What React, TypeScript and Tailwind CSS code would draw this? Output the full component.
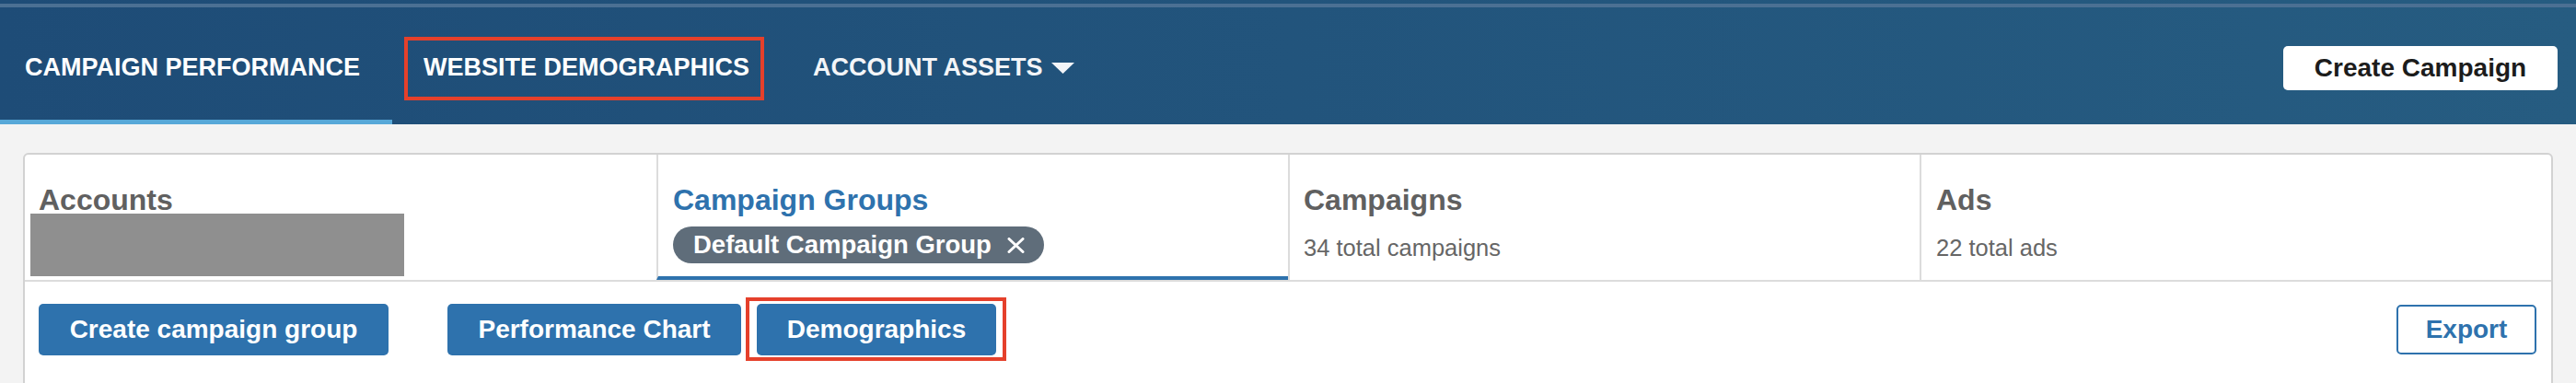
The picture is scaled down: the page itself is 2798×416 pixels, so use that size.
import { ReactNode } from "react";

function NavItem({ label, active, pad, children }: { label: string; active?: boolean; pad: string; children?: ReactNode }) {
  return (
    <div
      className={`relative flex items-center pt-[8px] border-b-[5px] ${pad} ${
        active ? "border-[#57a8d8]" : "border-transparent"
      }`}
    >
      <span className="text-[27px] font-bold text-white leading-none">{label}</span>
      {children}
    </div>
  );
}

function TabTitle({ text, active }: { text: string; active?: boolean }) {
  return (
    <div className={`text-[32px] leading-[38px] font-bold ${active ? "text-[#2e72ad]" : "text-[#606060]"}`}>{text}</div>
  );
}

function BlueButton({ label, width }: { label: string; width: string }) {
  return (
    <button className={`${width} h-[56px] rounded-[5px] bg-[#2e72ad] text-white text-[28px] font-bold flex items-center justify-center`}>
      {label}
    </button>
  );
}

export default function App() {
  return (
    <div className="w-[2798px] h-[416px] overflow-hidden bg-[#f3f3f3] font-['Liberation_Sans',Arial,sans-serif]">
      {/* Top navigation */}
      <header className="h-[135px] flex flex-col bg-gradient-to-r from-[#1e4c77] to-[#265c81]">
        <div className="h-[4px]" />
        <div className="h-[4px] bg-[#4b7093]" />
        <div className="flex-1 flex items-stretch">
          <NavItem label="CAMPAIGN PERFORMANCE" active pad="pl-[27px] pr-[35px]" />
          <NavItem label="WEBSITE DEMOGRAPHICS" pad="px-[34px]">
            <div className="absolute left-[13px] right-[18px] top-[32px] h-[69px] border-4 border-[#e5402b]" />
          </NavItem>
          <div className="flex items-center pt-[8px] pb-[5px] pl-[35px]">
            <span className="text-[27px] font-bold text-[#f3f5f8] leading-none">ACCOUNT ASSETS</span>
            <svg className="ml-[9px] mt-[2px]" width="25" height="12" viewBox="0 0 25 12">
              <polygon points="0,0 25,0 12.5,12" fill="#f3f5f8" />
            </svg>
          </div>
          <div className="ml-auto mr-[20px] flex items-center pt-[5px]">
            <button className="w-[298px] h-[48px] rounded-[5px] bg-white text-[#1c1c1c] text-[28px] font-bold">
              Create Campaign
            </button>
          </div>
        </div>
      </header>

      {/* Content card */}
      <main className="px-[25px] pt-[31px]">
        <div className="h-[320px] rounded-[6px] border-2 border-[#d2d2d2] bg-white">
          <div className="grid grid-cols-4 h-[138px] border-b-2 border-[#dcdcdc]">
            <div className="pl-[15px] pt-[30px]">
              <TabTitle text="Accounts" />
              <div className="-ml-[9px] -mt-[4px] w-[406px] h-[68px] bg-[#8f8f8f]" />
            </div>
            <div className="pl-[16px] pt-[30px] border-l-2 border-b-4 border-l-[#dcdcdc] border-b-[#2e72ad]">
              <TabTitle text="Campaign Groups" active />
              <div className="mt-[10px] inline-flex items-center h-[40px] rounded-full bg-[#5f6d7a] pl-[22px] pr-[21px]">
                <span className="text-[27.5px] font-bold text-white leading-none">Default Campaign Group</span>
                <svg className="ml-[17px]" width="19" height="17" viewBox="0 0 19 17">
                  <path d="M2 1.5 L17 15.5 M17 1.5 L2 15.5" stroke="#fff" strokeWidth="3" strokeLinecap="round" />
                </svg>
              </div>
            </div>
            <div className="pl-[15px] pt-[30px] border-l-2 border-[#dcdcdc]">
              <TabTitle text="Campaigns" />
              <div className="mt-[18px] text-[25.5px] leading-[30px] text-[#666]">34 total campaigns</div>
            </div>
            <div className="pl-[16px] pt-[30px] border-l-2 border-[#dcdcdc]">
              <TabTitle text="Ads" />
              <div className="mt-[18px] text-[25.5px] leading-[30px] text-[#666]">22 total ads</div>
            </div>
          </div>

          <div className="flex items-start pt-[24px] pl-[15px] pr-[16px]">
            <BlueButton label="Create campaign group" width="w-[380px]" />
            <div className="ml-[64px]">
              <BlueButton label="Performance Chart" width="w-[319px]" />
            </div>
            <div className="ml-[5px] -mt-[7px] border-4 border-[#e5402b] pl-[8px] pr-[7px] pt-[3px] pb-[2px]">
              <BlueButton label="Demographics" width="w-[260px]" />
            </div>
            <button className="ml-auto mt-[1px] w-[152px] h-[54px] rounded-[5px] border-2 border-[#2e72ad] bg-white text-[#2e72ad] text-[28px] font-bold">
              Export
            </button>
          </div>
        </div>
      </main>
    </div>
  );
}
